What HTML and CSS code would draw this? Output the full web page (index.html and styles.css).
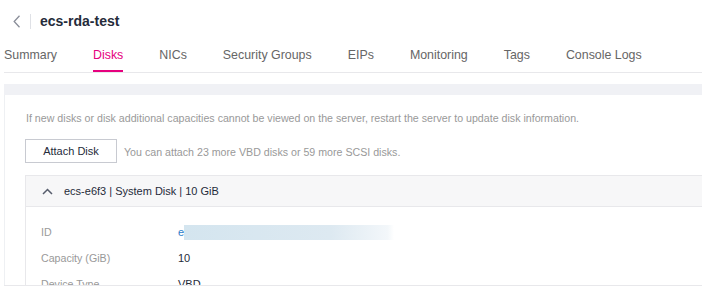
FILE: index.html
```html
<!DOCTYPE html>
<html lang="en">
<head>
    <meta charset="UTF-8">
    <title>ecs-rda-test</title>
    <link rel="stylesheet" href="styles.css">
</head>
<body>
<div class="head">
    <svg class="back" width="8" height="13" viewBox="0 0 8 13">
        <polyline points="6.5,0.8 1.2,6.5 6.5,12.2" fill="none" stroke="#8a8e99" stroke-width="1.3"/>
    </svg>
    <span class="sep"></span>
    <h1 class="title">ecs-rda-test</h1>
</div>
<ul class="tabs">
    <li>Summary</li>
    <li class="active">Disks</li>
    <li>NICs</li>
    <li>Security Groups</li>
    <li>EIPs</li>
    <li>Monitoring</li>
    <li>Tags</li>
    <li>Console Logs</li>
</ul>
<div class="content">
    <div class="panel">
        <p class="tip">If new disks or disk additional capacities cannot be viewed on the server, restart the server to update disk information.</p>
        <div class="actions">
            <button class="btn">Attach Disk</button>
            <span class="hint">You can attach 23 more VBD disks or 59 more SCSI disks.</span>
        </div>
        <div class="disk">
            <div class="disk-head">
                <svg class="caret" width="11" height="7" viewBox="0 0 11 7">
                    <polyline points="1,6 5.5,1.5 10,6" fill="none" stroke="#575d6c" stroke-width="1.5"/>
                </svg>
                <span>ecs-e6f3 | System Disk | 10 GiB</span>
            </div>
            <div class="disk-body">
                <div class="row">
                    <span class="label">ID</span>
                    <span class="value id"><span class="link">e</span><span class="blur"></span></span>
                </div>
                <div class="row">
                    <span class="label">Capacity (GiB)</span>
                    <span class="value">10</span>
                </div>
                <div class="row">
                    <span class="label">Device Type</span>
                    <span class="value">VBD</span>
                </div>
            </div>
        </div>
    </div>
</div>
<div class="foot"></div>
</body>
</html>
```

FILE: styles.css
```css
*{
    margin: 0;
    padding: 0;
    box-sizing: border-box;
}
ul{
    list-style-type: none;
}
body{
    font-family: "Liberation Sans", Arial, sans-serif;
    background-color: #fff;
    color: #252b3a;
    overflow: hidden;
}
.head{
    height: 42px;
    display: flex;
    align-items: center;
    padding-left: 13px;
}
.back{
    display: block;
}
.sep{
    width: 1px;
    height: 15px;
    background-color: #dfe1e6;
    margin: 0 9px 0 9px;
}
.title{
    font-size: 14px;
    font-weight: bold;
    color: #252b3a;
}
.tabs{
    display: flex;
    gap: 36px;
    margin-left: 4px;
    border-bottom: 1px solid #e8e8eb;
}
.tabs li{
    font-size: 12.4px;
    line-height: 18px;
    padding: 4px 0 6px;
    color: #666;
    border-bottom: 2px solid transparent;
}
.tabs .active{
    color: #e6007e;
    border-bottom-color: #e6007e;
}
.content{
    margin: 11px 0 0 4px;
    padding-top: 11px;
    background-color: #f0f1f5;
}
.panel{
    background-color: #fff;
    border-left: 1px solid #eef0f3;
    padding: 15px 0 0 20px;
    height: 200px;
}
.tip{
    font-size: 10.65px;
    line-height: 16px;
    color: #999;
    padding-left: 1px;
}
.actions{
    display: flex;
    align-items: center;
    margin-top: 13px;
}
.btn{
    width: 92px;
    height: 24px;
    border: 1px solid #c8cad1;
    background-color: #fff;
    font-family: inherit;
    font-size: 11px;
    color: #252b3a;
}
.hint{
    font-size: 10.65px;
    color: #999;
    margin-left: 7px;
    padding-top: 2px;
}
.disk{
    margin-top: 12px;
    border-left: 1px solid #e8e8eb;
}
.disk-head{
    height: 32px;
    display: flex;
    align-items: center;
    padding-left: 16px;
    background-color: #f7f7f8;
    border-top: 1px solid #e8e8eb;
    border-bottom: 1px solid #e8e8eb;
    font-size: 11px;
    color: #252b3a;
}
.caret{
    margin-right: 11px;
}
.disk-body{
    padding: 12px 0 0 15px;
}
.row{
    display: flex;
    align-items: center;
    height: 26px;
    font-size: 10.65px;
}
.label{
    width: 137px;
    color: #999;
}
.value{
    font-size: 11px;
    color: #252b3a;
}
.id{
    display: flex;
    align-items: center;
}
.link{
    color: #2a7dc9;
}
.blur{
    width: 210px;
    height: 15px;
    background: linear-gradient(to right, #d4e5ef, #dde9f1 70%, #f3f7fa 97%, #fff);
}
.foot{
    position: fixed;
    left: 4px;
    right: 0;
    bottom: 0;
    height: 4px;
    background-color: #fff;
    border-top: 1px solid #e8e8eb;
}
```
